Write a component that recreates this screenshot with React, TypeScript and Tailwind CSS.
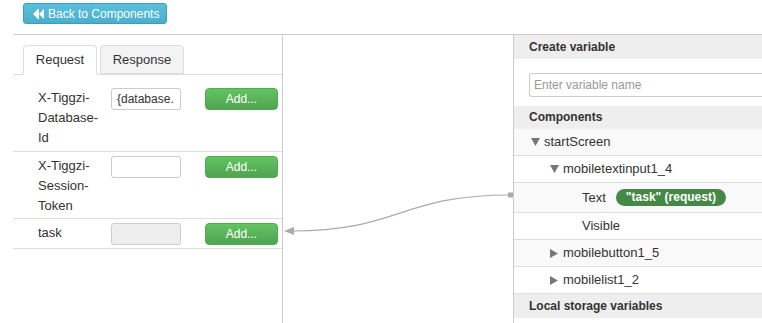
import React from "react";

const font = { fontFamily: '"Liberation Sans", Arial, sans-serif' };

function Down() {
  return (
    <span className="inline-flex w-[13px] items-center">
      <svg width="9" height="8" viewBox="0 0 9 8">
        <path d="M0 0 L9 0 L4.5 8 Z" fill="#777" />
      </svg>
    </span>
  );
}
function Right() {
  return (
    <span className="inline-flex w-[13px] items-center">
      <svg width="8" height="9" viewBox="0 0 8 9">
        <path d="M0 0 L8 4.5 L0 9 Z" fill="#777" />
      </svg>
    </span>
  );
}

function AddBtn() {
  return (
    <button className="w-[73px] h-[22px] rounded-[4px] border border-[#4cae4c] bg-gradient-to-b from-[#62c462] to-[#51a351] text-white text-[12px] leading-[20px]">
      Add...
    </button>
  );
}

export default function App() {
  return (
    <div className="relative w-[762px] h-[323px] overflow-hidden bg-white text-[#333] text-[13px]" style={font}>
      <div className="h-[34px] pl-[23px] pt-[3px]">
        <button className="flex items-center h-[21px] w-[144px] rounded-[3px] border border-[#3a9dbb] bg-gradient-to-b from-[#5bc0de] to-[#49afcd] text-white text-[12px] pl-[9px] gap-[3px]">
          <svg width="12" height="10" viewBox="0 0 12 10">
            <path d="M5 0 L0 5 L5 10 Z M11 0 L6 5 L11 10 Z" fill="white" />
            <rect x="4.5" y="0" width="1.5" height="10" fill="white" />
          </svg>
          <span>Back to Components</span>
        </button>
      </div>
      <div className="flex ml-[13px] border-t border-[#ccc] h-[289px]">
        {/* left panel */}
        <div className="w-[270px] border-r border-[#ccc] shrink-0">
          <div className="pt-[10px] border-b border-[#ddd] flex gap-[3px] pl-[10px] h-[40px]">
            <div className="w-[74px] h-[30px] -mb-px border border-[#ddd] border-b-white bg-white rounded-t-[4px] flex items-center justify-center">
              Request
            </div>
            <div className="w-[84px] h-[29px] border border-[#ddd] bg-[#f3f3f3] rounded-t-[4px] flex items-center justify-center">
              Response
            </div>
          </div>
          <div className="pt-[9px]">
            <div className="flex border-b border-[#ddd] pt-[4px] pb-[3px]">
              <div className="w-[98px] pl-[25px] leading-[20px]">
                X-Tiggzi-<br />Database-<br />Id
              </div>
              <div className="w-[94px]">
                <div className="w-[70px] h-[22px] border border-[#ccc] rounded-[3px] px-[5px] text-[12px] leading-[20px] overflow-hidden whitespace-nowrap">
                  {"{database."}
                </div>
              </div>
              <AddBtn />
            </div>
            <div className="flex border-b border-[#ddd] pt-[4px] pb-[2px]">
              <div className="w-[98px] pl-[25px] leading-[20px]">
                X-Tiggzi-<br />Session-<br />Token
              </div>
              <div className="w-[94px]">
                <div className="w-[70px] h-[22px] border border-[#ccc] rounded-[3px]" />
              </div>
              <AddBtn />
            </div>
            <div className="flex border-b border-[#ddd] pt-[4px] pb-[3px]">
              <div className="w-[98px] pl-[25px] leading-[20px]">task</div>
              <div className="w-[94px]">
                <div className="w-[70px] h-[22px] border border-[#ccc] rounded-[3px] bg-[#eee]" />
              </div>
              <AddBtn />
            </div>
          </div>
        </div>
        {/* canvas */}
        <div className="w-[230px] shrink-0" />
        {/* right panel */}
        <div className="flex-1 border-l border-[#ccc]">
          <div className="h-[24px] bg-[#eee] pl-[15px] font-bold text-[12px] leading-[24px]">Create variable</div>
          <div className="h-[47px] pl-[15px] pt-[14px]">
            <div className="h-[24px] border border-[#ccc] rounded-l-[3px] border-r-0 text-[#999] text-[12px] leading-[22px] pl-[4px]">
              Enter variable name
            </div>
          </div>
          <div className="h-[23px] bg-[#eee] pl-[15px] font-bold text-[12px] leading-[23px]">Components</div>
          <div className="h-[27px] bg-[#f9f9f9] border-b border-[#ddd] pl-[17px] flex items-center">
            <Down />
            <span>startScreen</span>
          </div>
          <div className="h-[27px] border-b border-[#ddd] pl-[36px] flex items-center">
            <Down />
            <span>mobiletextinput1_4</span>
          </div>
          <div className="h-[30px] bg-[#f9f9f9] border-b border-[#ddd] pl-[68px] flex items-center">
            <span>Text</span>
            <span className="ml-[10px] h-[17px] px-[10px] rounded-full bg-[#468847] text-white font-bold text-[12px] leading-[17px]">
              "task" (request)
            </span>
          </div>
          <div className="h-[27px] border-b border-[#ddd] pl-[68px] flex items-center">Visible</div>
          <div className="h-[27px] bg-[#f9f9f9] border-b border-[#ddd] pl-[36px] flex items-center">
            <Right />
            <span>mobilebutton1_5</span>
          </div>
          <div className="h-[27px] border-b border-[#ddd] pl-[36px] flex items-center">
            <Right />
            <span>mobilelist1_2</span>
          </div>
          <div className="h-[24px] bg-[#eee] pl-[15px] font-bold text-[12px] leading-[24px]">Local storage variables</div>
        </div>
      </div>
      <svg className="absolute left-0 top-0 pointer-events-none" width="762" height="323">
        <path d="M510 195 C 400 195, 400 231, 292 231" fill="none" stroke="#aaa" strokeWidth="1.2" />
        <path d="M284 231 L294 227 L294 235 Z" fill="#aaa" />
        <rect x="508" y="192.5" width="5" height="5" fill="#aaa" />
      </svg>
    </div>
  );
}
